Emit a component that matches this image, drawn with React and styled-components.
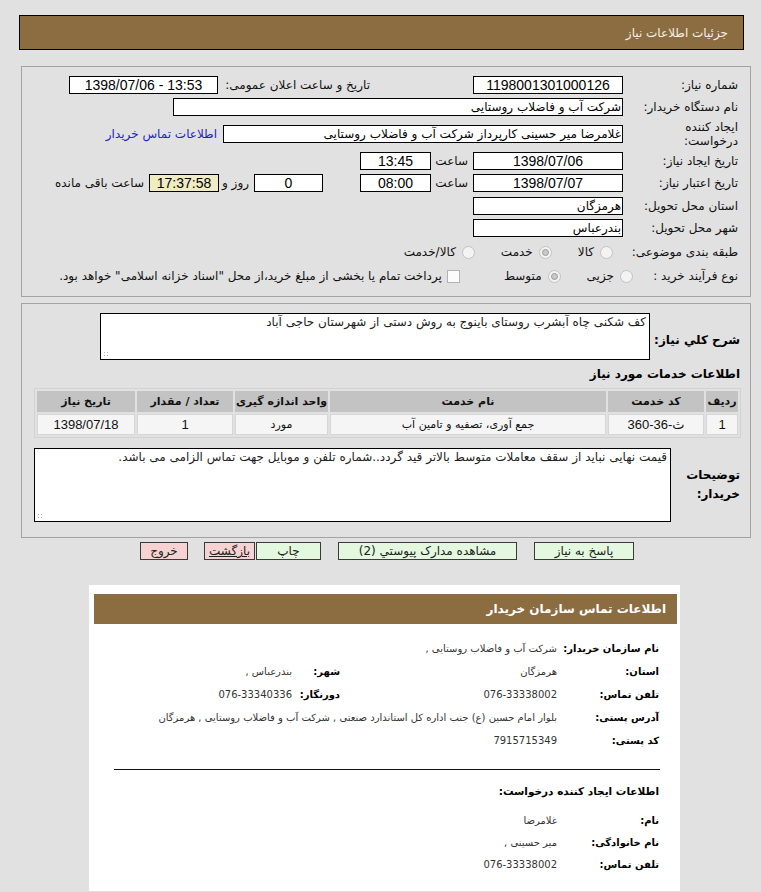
import React from 'react';
import styled, { createGlobalStyle } from 'styled-components';

const GlobalStyle = createGlobalStyle`
	html, body {
		margin: 0;
		padding: 0;
		background: #e1e1e1;
		overflow: hidden;
	}
	body {
		font-family: 'DejaVu Sans', 'Liberation Sans', sans-serif;
		font-size: 11px;
		color: #000;
	}
`;

function App() {
	return (
		<Page dir='rtl'>
			<GlobalStyle />
			<TitleBar>جزئیات اطلاعات نیاز</TitleBar>

			<Panel pad='7px 12px 9px 0'>
				<Row>
					<Label w={115}>شماره نیاز:</Label>
					<Field w={150} center>1198001301000126</Field>
					<Label w={152} gap={103}>تاریخ و ساعت اعلان عمومی:</Label>
					<Field w={149} center dir='ltr'>1398/07/06 - 13:53</Field>
				</Row>
				<Row>
					<Label w={115}>نام دستگاه خریدار:</Label>
					<Field w={450}>شرکت آب و فاضلاب روستایی</Field>
				</Row>
				<Row h={32}>
					<Label w={115}>
						ایجاد کننده
						<br />
						درخواست:
					</Label>
					<Field w={400}>غلامرضا میر حسینی کارپرداز شرکت آب و فاضلاب روستایی</Field>
					<Link>اطلاعات تماس خریدار</Link>
				</Row>
				<Row>
					<Label w={115}>تاریخ ایجاد نیاز:</Label>
					<Field w={150} center>1398/07/06</Field>
					<SmallLabel w={42}>ساعت</SmallLabel>
					<Field w={71} center>13:45</Field>
				</Row>
				<Row>
					<Label w={115}>تاریخ اعتبار نیاز:</Label>
					<Field w={150} center>1398/07/07</Field>
					<SmallLabel w={42}>ساعت</SmallLabel>
					<Field w={71} center>08:00</Field>
					<Field w={69} center gap={37}>0</Field>
					<SmallLabel w={35}>روز و</SmallLabel>
					<Field w={70} center warn>17:37:58</Field>
					<SmallLabel w={95}>ساعت باقی مانده</SmallLabel>
				</Row>
				<Row h={23}>
					<Label w={115}>استان محل تحویل:</Label>
					<Field w={150}>هرمزگان</Field>
				</Row>
				<Row>
					<Label w={115}>شهر محل تحویل:</Label>
					<Field w={150}>بندرعباس</Field>
				</Row>
				<Row h={26}>
					<Label w={125}>طبقه بندی موضوعی:</Label>
					<Radio />
					<Choice>کالا</Choice>
					<Radio checked />
					<Choice>خدمت</Choice>
					<Radio />
					<Choice>کالا/خدمت</Choice>
				</Row>
				<Row>
					<Label w={105}>نوع فرآیند خرید :</Label>
					<Radio />
					<Choice>جزیی</Choice>
					<Radio checked />
					<Choice>متوسط</Choice>
					<Check />
					<Choice>
						پرداخت تمام یا بخشی از مبلغ خرید،از محل "اسناد خزانه اسلامی" خواهد بود.
					</Choice>
				</Row>
			</Panel>

			<Panel top={6} pad='9px 10px 15px 0'>
				<Row h={47} align='flex-end'>
					<BoldLabel w={90} pb={12}>شرح کلي نیاز:</BoldLabel>
					<TextBox w={550} h={47}>
						کف شکنی چاه آبشرب روستای باینوج به روش دستی از  شهرستان حاجی آباد
						<Grip />
					</TextBox>
				</Row>
				<Heading>اطلاعات خدمات مورد نیاز</Heading>
				<Table>
					<thead>
						<tr>
							<Th w={32}>ردیف</Th>
							<Th w={96}>کد خدمت</Th>
							<Th w={276}>نام خدمت</Th>
							<Th w={93}>واحد اندازه گیری</Th>
							<Th w={96}>تعداد / مقدار</Th>
							<Th>تاریخ نیاز</Th>
						</tr>
					</thead>
					<tbody>
						<tr>
							<Td>1</Td>
							<Td>ث-36-360</Td>
							<Td small>جمع آوری، تصفیه و تامین آب</Td>
							<Td small>مورد</Td>
							<Td>1</Td>
							<Td>1398/07/18</Td>
						</tr>
					</tbody>
				</Table>
				<Row h={74} top={10}>
					<BoldLabel w={69}>
						توضیحات
						<br />
						خریدار:
					</BoldLabel>
					<TextBox w={637} h={74}>
						قیمت نهایی نباید از سقف معاملات متوسط بالاتر قید گردد..شماره تلفن و موبایل جهت تماس الزامی می باشد.
						<Grip />
					</TextBox>
				</Row>
			</Panel>

			<ButtonBar>
				<Button w={100} gap={0}>پاسخ به نیاز</Button>
				<Button w={179} gap={17}>مشاهده مدارک پیوستي (2)</Button>
				<Button w={65} gap={17}>چاپ</Button>
				<Button w={51} gap={1} danger link>بازگشت</Button>
				<Button w={48} gap={16} danger>خروج</Button>
			</ButtonBar>

			<Card>
				<CardHeader>اطلاعات تماس سازمان خریدار</CardHeader>
				<InfoGrid>
					<InfoLabel>نام سازمان خریدار:</InfoLabel>
					<InfoValue span={3}>شرکت آب و فاضلاب روستایی ,</InfoValue>

					<InfoLabel>استان:</InfoLabel>
					<InfoValue>هرمزگان</InfoValue>
					<InfoLabel>شهر:</InfoLabel>
					<InfoValue>بندرعباس ,</InfoValue>

					<InfoLabel>تلفن تماس:</InfoLabel>
					<InfoValue>076-33338002</InfoValue>
					<InfoLabel>دورنگار:</InfoLabel>
					<InfoValue>076-33340336</InfoValue>

					<InfoLabel>آدرس پستی:</InfoLabel>
					<InfoValue span={3}>
						بلوار امام حسین (ع) جنب اداره کل استاندارد صنعتی , شرکت آب و فاضلاب روستایی , هرمزگان
					</InfoValue>

					<InfoLabel>کد پستی:</InfoLabel>
					<InfoValue span={3}>7915715349</InfoValue>
				</InfoGrid>
				<Divider />
				<SubHeading>اطلاعات ایجاد کننده درخواست:</SubHeading>
				<InfoGrid top={10} rowH={22}>
					<InfoLabel>نام:</InfoLabel>
					<InfoValue span={3}>غلامرضا</InfoValue>
					<InfoLabel>نام خانوادگی:</InfoLabel>
					<InfoValue span={3}>میر حسینی ,</InfoValue>
					<InfoLabel>تلفن تماس:</InfoLabel>
					<InfoValue span={3}>076-33338002</InfoValue>
				</InfoGrid>
			</Card>
		</Page>
	);
}

export default App;

const Page = styled.div`
	width: 761px;
	padding-top: 15px;
`;

const TitleBar = styled.div`
	margin: 0 17px 0 19px;
	height: 33px;
	border: 1px solid #000;
	background: #8b6d41;
	color: #f4efe6;
	font-size: 12px;
	display: flex;
	align-items: center;
	padding-right: 15px;
`;

const Panel = styled.div`
	margin: ${(p) => p.top || 16}px 10px 0 21px;
	border: 1px solid #a3a3a3;
	padding: ${(p) => p.pad};
`;

const Row = styled.div`
	display: flex;
	align-items: ${(p) => p.align || 'center'};
	height: ${(p) => p.h || 22}px;
	margin-top: ${(p) => p.top || 0}px;
`;

const Label = styled.div`
	flex: none;
	width: ${(p) => p.w}px;
	margin-right: ${(p) => p.gap || 0}px;
	font-size: 12px;
	line-height: 14px;
	color: #111;
`;

const SmallLabel = styled.div`
	flex: none;
	width: ${(p) => p.w}px;
	padding-right: 5px;
	box-sizing: border-box;
	font-size: 12px;
	color: #111;
	white-space: nowrap;
`;

const Field = styled.div`
	flex: none;
	box-sizing: border-box;
	width: ${(p) => p.w}px;
	height: 18px;
	margin-right: ${(p) => p.gap || 0}px;
	border: 1px solid #000;
	background: ${(p) => (p.warn ? '#efebc3' : '#fff')};
	text-align: ${(p) => (p.center ? 'center' : 'right')};
	font-family: ${(p) =>
		p.center ? "'Liberation Sans', 'DejaVu Sans', sans-serif" : "'DejaVu Sans', sans-serif"};
	font-size: ${(p) => (p.center ? 14 : 12)}px;
	line-height: 16px;
	padding: 0 1px;
	white-space: nowrap;
	overflow: hidden;
`;

const Link = styled.span`
	margin-right: 6px;
	color: #2323c8;
	font-size: 12px;
	white-space: nowrap;
`;

const Radio = styled.span`
	flex: none;
	position: relative;
	width: 11px;
	height: 11px;
	border-radius: 50%;
	border: 1px solid #c2c2c2;
	background: #f3f3f3;
	margin-left: 6px;
	&::after {
		content: '';
		display: ${(p) => (p.checked ? 'block' : 'none')};
		position: absolute;
		left: 2px;
		top: 2px;
		width: 5px;
		height: 5px;
		border-radius: 50%;
		border: 1px solid #9a9a9a;
		background: #c9c9c9;
	}
`;

const Check = styled.span`
	flex: none;
	width: 11px;
	height: 11px;
	border: 1px solid #b3b3b3;
	background: #fbfbfb;
	margin-left: 5px;
	margin-right: 18px;
`;

const Choice = styled.span`
	font-size: 12px;
	color: #111;
	margin-left: 26px;
	white-space: nowrap;
`;

const BoldLabel = styled.div`
	flex: none;
	align-self: center;
	width: ${(p) => p.w}px;
	padding-top: ${(p) => (p.pb ? 8 : 0)}px;
	font-size: 12px;
	font-weight: bold;
	line-height: 19px;
`;

const TextBox = styled.div`
	position: relative;
	box-sizing: border-box;
	width: ${(p) => p.w}px;
	height: ${(p) => p.h}px;
	border: 1px solid #000;
	background: #fff;
	padding: 1px 3px;
	font-size: 12px;
	line-height: 15px;
	color: #222;
`;

const Grip = styled.span`
	position: absolute;
	left: 2px;
	bottom: 2px;
	width: 6px;
	height: 6px;
	background-image: radial-gradient(circle, #b5b5b5 0.8px, transparent 1px);
	background-size: 3px 3px;
`;

const Heading = styled.div`
	margin-top: 6px;
	height: 16px;
	line-height: 16px;
	font-size: 12px;
	font-weight: bold;
`;

const Table = styled.table`
	margin-top: 6px;
	margin-right: -1px;
	width: 707px;
	border: 1px solid #d2d2d2;
	border-spacing: 2px;
	font-size: 11px;
`;

const Th = styled.th`
	width: ${(p) => (p.w ? `${p.w}px` : 'auto')};
	height: 21px;
	padding: 0;
	background: #c3c3c3;
	font-weight: bold;
	font-size: 11px;
	color: #111;
`;

const Td = styled.td`
	height: 19px;
	padding: 0;
	text-align: center;
	background: #f5f5f5;
	border: 1px solid #d6d6d6;
	font-family: ${(p) =>
		p.small ? "'DejaVu Sans', sans-serif" : "'Liberation Sans', 'DejaVu Sans', sans-serif"};
	font-size: ${(p) => (p.small ? 11 : 13)}px;
	color: #111;
`;

const ButtonBar = styled.div`
	display: flex;
	margin-top: 4px;
	padding-right: 127px;
	height: 18px;
`;

const Button = styled.div`
	box-sizing: border-box;
	width: ${(p) => p.w}px;
	height: 18px;
	margin-right: ${(p) => p.gap}px;
	border: 1px solid #3a3a3a;
	background: ${(p) => (p.danger ? '#f7d2d2' : '#e3f8df')};
	font-size: 12px;
	line-height: 16px;
	text-align: center;
	color: #222;
	text-decoration: ${(p) => (p.link ? 'underline' : 'none')};
	white-space: nowrap;
`;

const Card = styled.div`
	margin: 25px 81px 0 0;
	width: 591px;
	height: 306px;
	box-sizing: border-box;
	background: #fff;
	padding: 9px 3px 0 5px;
`;

const CardHeader = styled.div`
	height: 30px;
	line-height: 30px;
	background: #8b6d41;
	color: #fff;
	font-size: 12px;
	font-weight: bold;
	padding-right: 11px;
`;

const InfoGrid = styled.div`
	display: grid;
	grid-template-columns: 102px 217px 48px 1fr;
	grid-auto-rows: ${(p) => p.rowH || 23}px;
	align-items: center;
	margin-top: ${(p) => p.top || 13}px;
	padding-right: 18px;
`;

const InfoLabel = styled.div`
	font-size: 10px;
	font-weight: bold;
	color: #000;
	white-space: nowrap;
`;

const InfoValue = styled.div`
	grid-column: span ${(p) => p.span || 1};
	font-size: 10px;
	color: #333;
	white-space: nowrap;
`;

const Divider = styled.div`
	margin: 17px 17px 0 20px;
	height: 1px;
	background: #111;
`;

const SubHeading = styled.div`
	margin-top: 13px;
	padding-right: 18px;
	height: 16px;
	line-height: 16px;
	font-size: 10.5px;
	font-weight: bold;
`;
